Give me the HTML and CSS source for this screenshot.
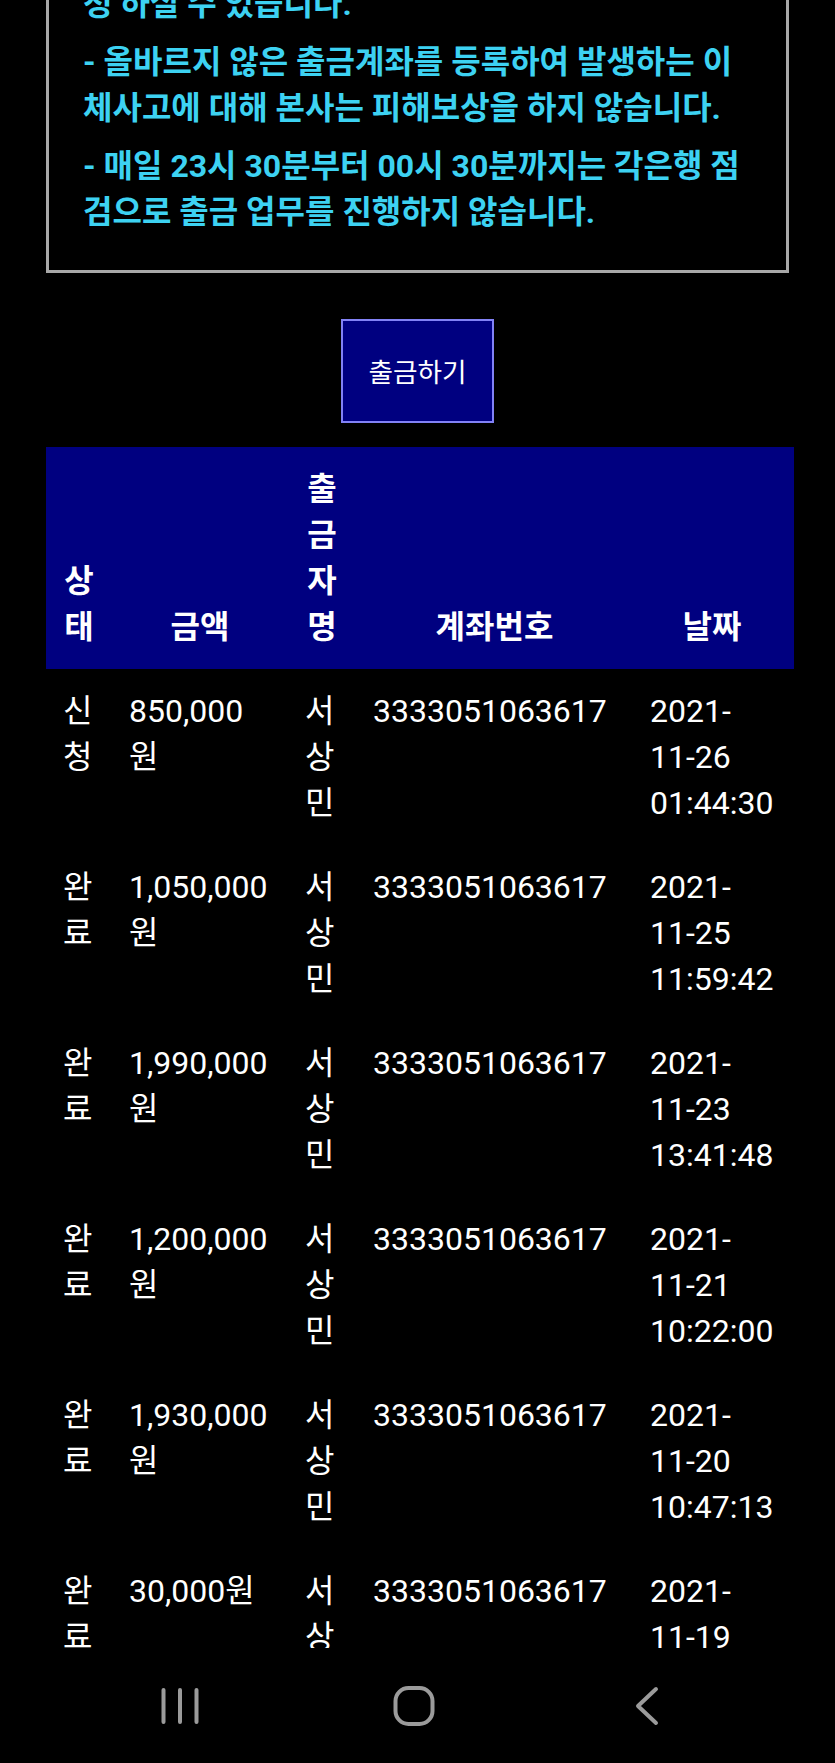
FILE: index.html
```html
<!DOCTYPE html>
<html lang="ko">
<head>
    <meta charset="UTF-8">
    <meta name="viewport" content="width=device-width, initial-scale=1.0">
    <title>출금신청</title>
    <link rel="stylesheet" href="styles.css">
</head>
<body>
    <div class="screen">
        <div class="content">
            <div class="notice">
                <p>- 출금은 회원님 본인명의 계좌로만 하루에 출금신청 하실 수 있습니다.</p>
                <p>- 올바르지 않은 출금계좌를 등록하여 발생하는 이체사고에 대해 본사는 피해보상을 하지 않습니다.</p>
                <p>- 매일 23시 30분부터 00시 30분까지는 각은행 점검으로 출금 업무를 진행하지 않습니다.</p>
            </div>

            <div class="actions">
                <button class="btn-withdraw">출금하기</button>
            </div>

            <table class="history">
                <thead>
                    <tr>
                        <th class="col-status">상태</th>
                        <th class="col-amount">금액</th>
                        <th class="col-name">출금자명</th>
                        <th class="col-account">계좌번호</th>
                        <th class="col-date">날짜</th>
                    </tr>
                </thead>
                <tbody>
                    <tr>
                        <td>신청</td>
                        <td>850,000원</td>
                        <td>서상민</td>
                        <td>3333051063617</td>
                        <td>2021-11-26 01:44:30</td>
                    </tr>
                    <tr>
                        <td>완료</td>
                        <td>1,050,000원</td>
                        <td>서상민</td>
                        <td>3333051063617</td>
                        <td>2021-11-25 11:59:42</td>
                    </tr>
                    <tr>
                        <td>완료</td>
                        <td>1,990,000원</td>
                        <td>서상민</td>
                        <td>3333051063617</td>
                        <td>2021-11-23 13:41:48</td>
                    </tr>
                    <tr>
                        <td>완료</td>
                        <td>1,200,000원</td>
                        <td>서상민</td>
                        <td>3333051063617</td>
                        <td>2021-11-21 10:22:00</td>
                    </tr>
                    <tr>
                        <td>완료</td>
                        <td>1,930,000원</td>
                        <td>서상민</td>
                        <td>3333051063617</td>
                        <td>2021-11-20 10:47:13</td>
                    </tr>
                    <tr>
                        <td>완료</td>
                        <td>30,000원</td>
                        <td>서상민</td>
                        <td>3333051063617</td>
                        <td>2021-11-19 09:15:27</td>
                    </tr>
                </tbody>
            </table>
        </div>

        <div class="navbar">
            <span class="nav-btn">
                <svg viewBox="0 0 60 60" width="60" height="60">
                    <path d="M13.5 14v32M30 14v32M46.5 14v32" />
                </svg>
            </span>
            <span class="nav-btn">
                <svg viewBox="0 0 60 60" width="60" height="60">
                    <rect x="11.5" y="12" width="37" height="36" rx="13" />
                </svg>
            </span>
            <span class="nav-btn">
                <svg viewBox="0 0 60 60" width="60" height="60">
                    <path d="M39 13L21 30L39 47" />
                </svg>
            </span>
        </div>
    </div>
</body>
</html>
```

FILE: styles.css
```css
:root {
    --navy: #000080;
    --cyan: #3dd2f2;
    --gray: #a8a8a8;
}

* {
    box-sizing: border-box;
}

body {
    margin: 0;
    background: #000;
    color: #fff;
    font-family: Roboto, "Noto Sans CJK KR", sans-serif;
    font-size: 32px;
    line-height: 46px;
}

.screen {
    height: 1763px;
    display: flex;
    flex-direction: column;
    overflow: hidden;
}

.content {
    flex: 1;
    overflow: hidden;
    padding: 0 46px;
}

/* scrolled down: the top of the notice is off screen */
.notice {
    margin-top: -103px;
    border: 3px solid var(--gray);
    padding: 35px 34px;
    color: var(--cyan);
    font-weight: bold;
}

.notice p {
    margin: 0 0 12px;
}

.notice p:last-child {
    margin-bottom: 0;
}

.actions {
    display: flex;
    justify-content: center;
    margin: 46px 0 24px;
}

.btn-withdraw {
    background: var(--navy);
    color: #fff;
    border: 2px solid #8282f6;
    font-family: "Noto Sans CJK KR", sans-serif;
    font-size: 26.67px;
    padding: 30px 25px;
    line-height: 40px;
}

.history {
    width: 748px;
    border-collapse: collapse;
    table-layout: fixed;
}

.history th,
.history td {
    padding: 19px 17px;
}

.history th:last-child,
.history td:last-child {
    padding-right: 20px;
}

.history thead tr {
    background: var(--navy);
}

.history th {
    vertical-align: bottom;
    text-align: center;
}

.history td {
    vertical-align: top;
    text-align: left;
}

.col-status { width: 66px; }
.col-amount { width: 176px; }
.col-name { width: 68px; }
.col-account { width: 277px; }
.col-date { width: 161px; }

.navbar {
    height: 115px;
    flex-shrink: 0;
    background: #000;
    display: flex;
    align-items: center;
    gap: 173.5px;
    padding-left: 150px;
}

.nav-btn svg {
    display: block;
    fill: none;
    stroke: #9b9b9b;
    stroke-width: 4;
    stroke-linecap: round;
    stroke-linejoin: round;
}
```
